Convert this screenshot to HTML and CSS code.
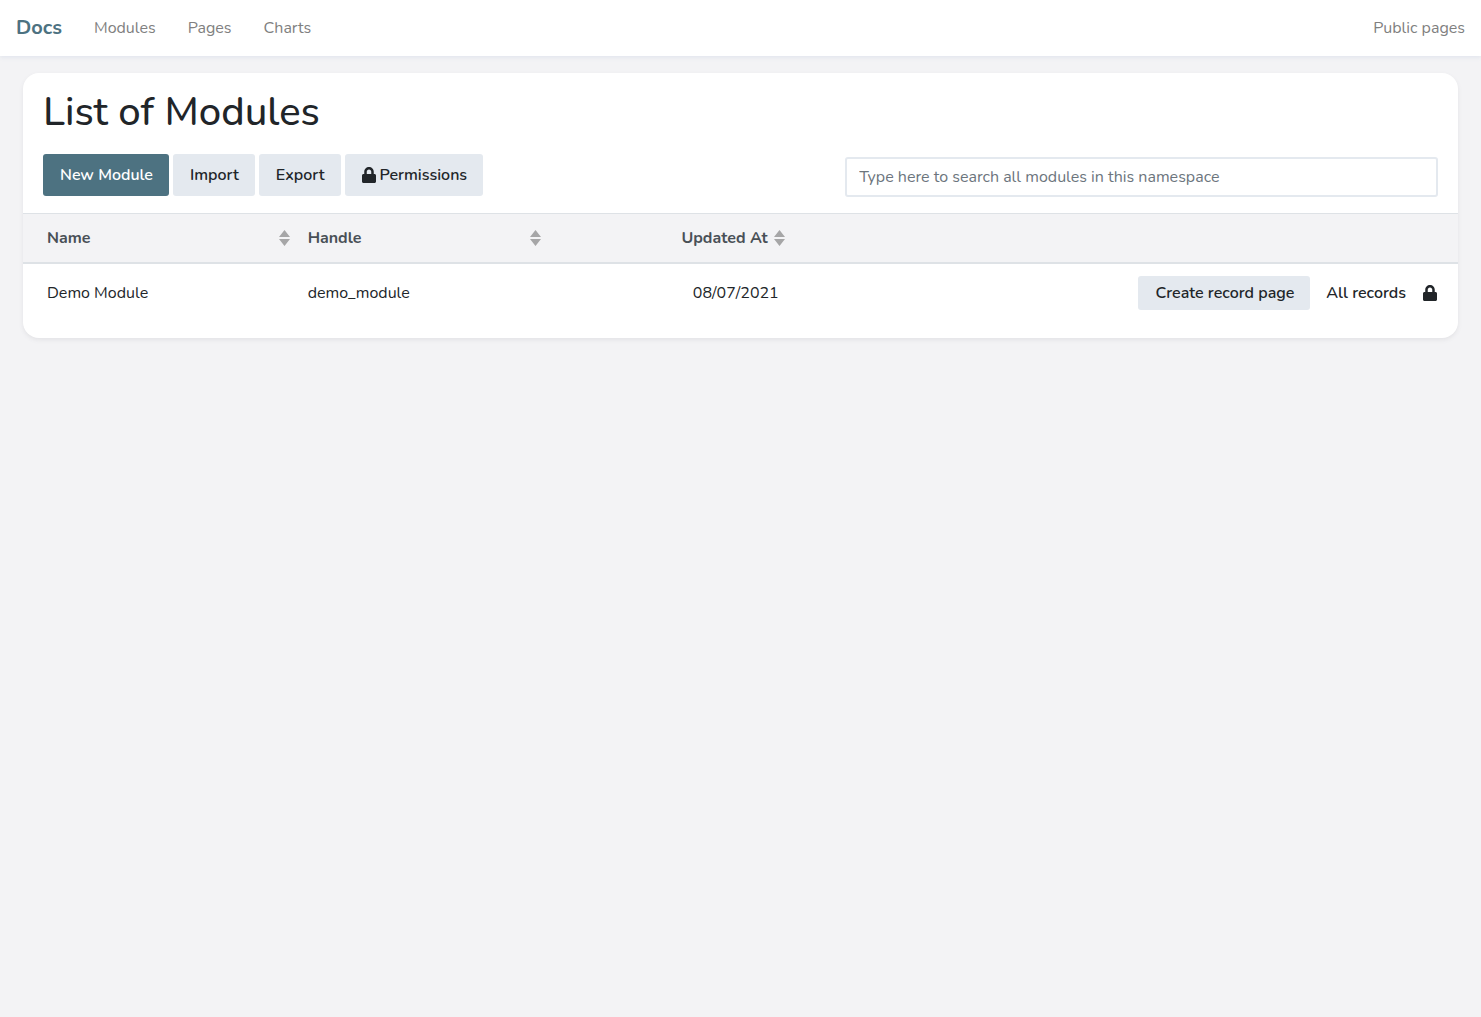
FILE: index.html
```html
<!DOCTYPE html>
<html lang="en">
<head>
<meta charset="utf-8">
<meta name="viewport" content="width=device-width, initial-scale=1">
<title>List of Modules</title>
<link rel="stylesheet" href="styles.css">
</head>
<body>
<svg class="sprite" aria-hidden="true">
  <symbol id="lock" viewBox="0 0 448 512"><path d="M400 224h-24v-72C376 68.200 307.800 0 224 0S72 68.200 72 152v72H48c-26.500 0-48 21.500-48 48v192c0 26.500 21.500 48 48 48h352c26.500 0 48-21.500 48-48V272c0-26.500-21.500-48-48-48zm-104 0H152v-72c0-39.700 32.300-72 72-72s72 32.300 72 72v72z"/></symbol>
  <symbol id="sort" viewBox="0 0 11 16"><path d="M0 7 5.500 0 11 7zM0 9h11l-5.500 7z"/></symbol>
</svg>
<header class="topbar">
  <nav class="nav">
    <a class="brand" href="#">Docs</a>
    <a href="#">Modules</a>
    <a href="#">Pages</a>
    <a href="#">Charts</a>
  </nav>
  <a href="#">Public pages</a>
</header>
<main class="page">
  <section class="card">
    <div class="card-header">
      <h1>List of Modules</h1>
      <div class="toolbar">
        <div class="actions">
          <button class="btn primary" type="button">New Module</button>
          <button class="btn" type="button">Import</button>
          <button class="btn" type="button">Export</button>
          <button class="btn" type="button"><svg class="lock"><use href="#lock"/></svg>Permissions</button>
        </div>
        <input class="search" type="search" aria-label="Search modules" placeholder="Type here to search all modules in this namespace">
      </div>
    </div>
    <table class="modules">
      <thead>
        <tr>
          <th class="name"><div class="sortable"><span>Name</span><svg class="sort"><use href="#sort"/></svg></div></th>
          <th class="handle"><div class="sortable"><span>Handle</span><svg class="sort"><use href="#sort"/></svg></div></th>
          <th class="updated"><div class="sortable"><span>Updated At</span><svg class="sort"><use href="#sort"/></svg></div></th>
          <th class="links" aria-label="Actions"></th>
        </tr>
      </thead>
      <tbody>
        <tr>
          <td class="name">Demo Module</td>
          <td class="handle">demo_module</td>
          <td class="updated">08/07/2021</td>
          <td class="links">
            <div class="row-actions">
              <button class="btn small" type="button">Create record page</button>
              <a class="records" href="#">All records</a>
              <button class="icon-button" type="button" aria-label="Permissions"><svg class="lock"><use href="#lock"/></svg></button>
            </div>
          </td>
        </tr>
      </tbody>
    </table>
  </section>
</main>
</body>
</html>
```
FILE: styles.css
```css
* {
  box-sizing: border-box;
}

body {
  margin: 0;
  background: #f3f3f5;
  color: #212529;
  font: 400 16px/24px Nunito, Lato, sans-serif;
}

a {
  color: inherit;
  text-decoration: none;
}

button,
input {
  font: inherit;
  color: inherit;
}

.sprite {
  display: none;
}

.topbar {
  display: flex;
  align-items: center;
  justify-content: space-between;
  height: 56px;
  padding: 0 16px;
  background: #fff;
  box-shadow: 0 2px 4px #e4e7ee;
  color: #808080;
}

.nav {
  display: flex;
  align-items: center;
  gap: 32px;
}

.brand {
  color: #4d7281;
  font-size: 20px;
  font-weight: 700;
}

.page {
  padding: 17px 23px;
}

.card {
  padding-bottom: 16px;
  border-radius: 16px;
  background: #fff;
  box-shadow: 0 2px 4px #e3e3e6;
}

.card-header {
  padding: 15px 20px 16px;
}

h1 {
  margin: 0 0 18px;
  font-size: 40px;
  font-weight: 500;
  line-height: 48px;
}

.toolbar {
  display: flex;
  align-items: flex-end;
  justify-content: space-between;
}

.actions {
  display: flex;
  gap: 4px;
  margin-bottom: 1px;
}

.btn {
  display: inline-flex;
  align-items: center;
  gap: 4px;
  height: 42px;
  padding: 0 16px 0 17px;
  border: 0;
  border-radius: 3px;
  background: #e4e9ef;
  font-weight: 600;
  white-space: nowrap;
}

.btn.primary {
  background: #4d7281;
  color: #fff;
}

.btn.small {
  height: 34px;
}

.lock {
  width: 14px;
  height: 16px;
  fill: currentColor;
}

.search {
  width: 42.5%;
  height: 40px;
  padding: 0 12px;
  border: 2px solid #e4e9ef;
  border-radius: 3px;
  background: #fff;
}

.search::placeholder {
  color: #6c757d;
  opacity: 1;
}

.modules {
  width: 100%;
  border-collapse: separate;
  border-spacing: 0;
  table-layout: fixed;
}

th {
  padding: 12px 6px 12px 12px;
  border-top: 1px solid #dee2e6;
  border-bottom: 2px solid #dee2e6;
  background: #f3f3f5;
  color: #495057;
  font-weight: 700;
  text-align: left;
}

td {
  padding: 12px;
}

th.name,
td.name {
  width: 19%;
  padding-left: 24px;
}

.handle {
  width: 17.5%;
}

.updated {
  width: 17%;
  text-align: right;
}

td.links {
  padding-right: 21px;
}

.sortable {
  display: flex;
  align-items: center;
  justify-content: space-between;
  gap: 6px;
}

.updated .sortable {
  justify-content: flex-end;
}

.sort {
  width: 11px;
  height: 16px;
  fill: #a6a6a7;
}

.row-actions {
  display: flex;
  align-items: center;
  justify-content: flex-end;
}

.records {
  margin: 0 17px 0 16px;
  font-weight: 600;
}

.icon-button {
  display: flex;
  padding: 0;
  border: 0;
  background: none;
}
```
